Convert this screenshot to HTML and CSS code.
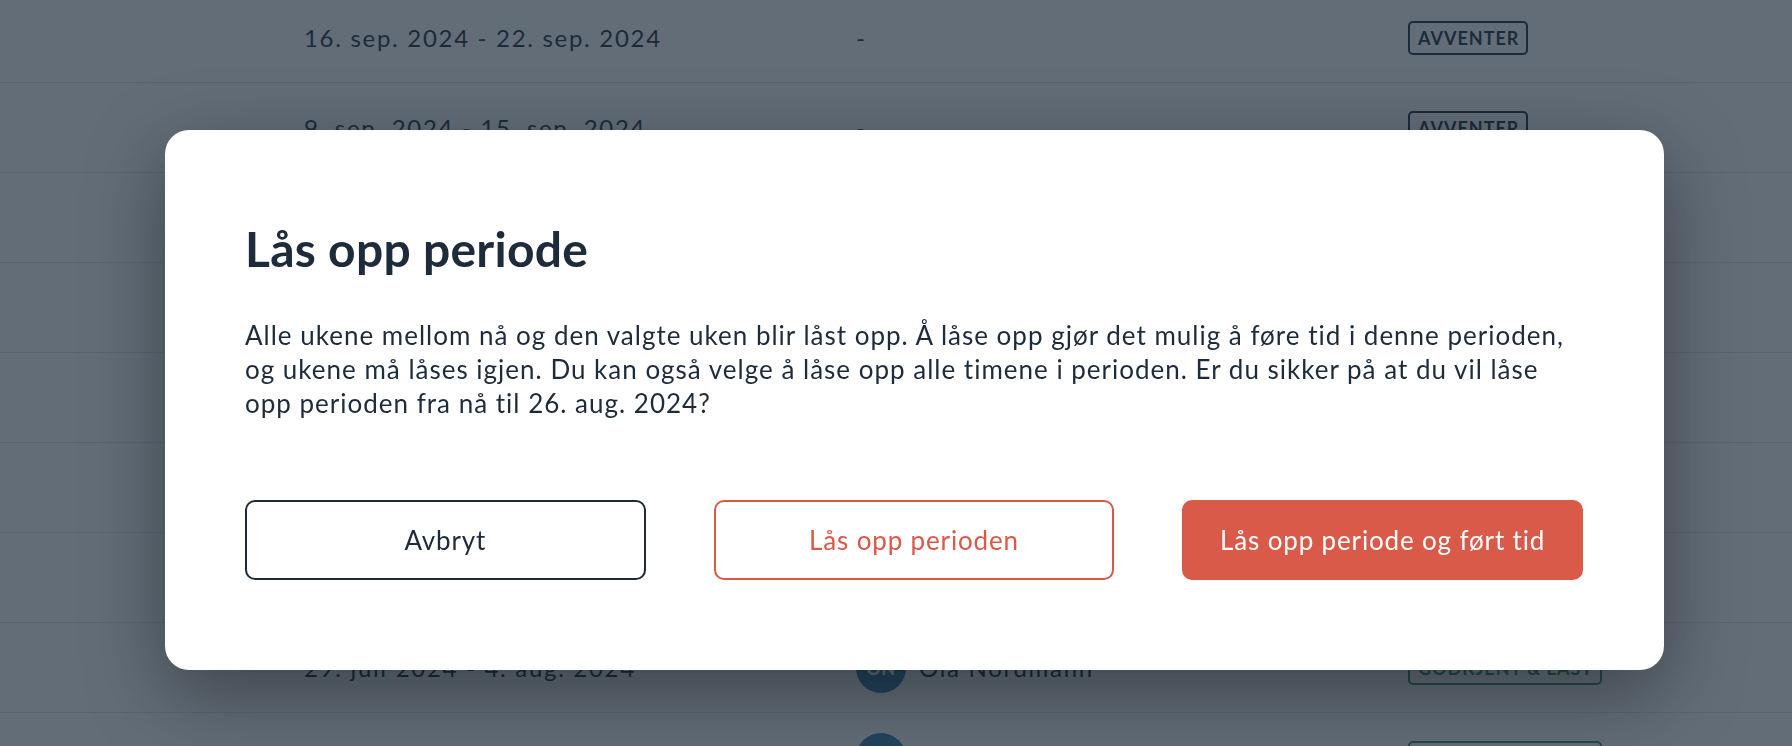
FILE: index.html
```html
<!DOCTYPE html>
<html lang="nb">
<head>
<meta charset="utf-8">
<title>Lås opp periode</title>
<link rel="stylesheet" href="styles.css">
</head>
<body>
<main class="page">
  <div class="table">
    <div class="row">
      <div class="c-date">16. sep. 2024 - 22. sep. 2024</div>
      <div class="c-who">-</div>
      <div class="c-status"><span class="badge">AVVENTER</span></div>
    </div>
    <div class="row">
      <div class="c-date">9. sep. 2024 - 15. sep. 2024</div>
      <div class="c-who">-</div>
      <div class="c-status"><span class="badge">AVVENTER</span></div>
    </div>
    <div class="row">
      <div class="c-date">2. sep. 2024 - 8. sep. 2024</div>
      <div class="c-who">-</div>
      <div class="c-status"><span class="badge">AVVENTER</span></div>
    </div>
    <div class="row">
      <div class="c-date">26. aug. 2024 - 1. sep. 2024</div>
      <div class="c-who">-</div>
      <div class="c-status"><span class="badge">AVVENTER</span></div>
    </div>
    <div class="row">
      <div class="c-date">19. aug. 2024 - 25. aug. 2024</div>
      <div class="c-who"><span class="avatar">ON</span><span>Ola Nordmann</span></div>
      <div class="c-status"><span class="badge badge-green">GODKJENT &amp; LÅST</span></div>
    </div>
    <div class="row">
      <div class="c-date">12. aug. 2024 - 18. aug. 2024</div>
      <div class="c-who"><span class="avatar">ON</span><span>Ola Nordmann</span></div>
      <div class="c-status"><span class="badge badge-green">GODKJENT &amp; LÅST</span></div>
    </div>
    <div class="row">
      <div class="c-date">5. aug. 2024 - 11. aug. 2024</div>
      <div class="c-who"><span class="avatar">ON</span><span>Ola Nordmann</span></div>
      <div class="c-status"><span class="badge badge-green">GODKJENT &amp; LÅST</span></div>
    </div>
    <div class="row">
      <div class="c-date">29. juli 2024 - 4. aug. 2024</div>
      <div class="c-who"><span class="avatar">ON</span><span>Ola Nordmann</span></div>
      <div class="c-status"><span class="badge badge-green">GODKJENT &amp; LÅST</span></div>
    </div>
    <div class="row">
      <div class="c-date">22. juli 2024 - 28. juli 2024</div>
      <div class="c-who"><span class="avatar">ON</span><span>Ola Nordmann</span></div>
      <div class="c-status"><span class="badge badge-green">GODKJENT &amp; LÅST</span></div>
    </div>
  </div>
</main>

<div class="overlay">
  <div class="modal" role="dialog" aria-labelledby="modal-title">
    <h2 class="modal-title" id="modal-title">Lås opp periode</h2>
    <p class="modal-text">Alle ukene mellom nå og den valgte uken blir låst opp. Å låse opp gjør det mulig å føre tid i denne perioden, og ukene må låses igjen. Du kan også velge å låse opp alle timene i perioden. Er du sikker på at du vil låse opp perioden fra nå til 26. aug. 2024?</p>
    <div class="modal-actions">
      <button class="btn btn-dark-outline">Avbryt</button>
      <button class="btn btn-red-outline">Lås opp perioden</button>
      <button class="btn btn-red">Lås opp periode og ført tid</button>
    </div>
  </div>
</div>
</body>
</html>
```

FILE: styles.css
```css
html, body {
  margin: 0;
  padding: 0;
  height: 100%;
  overflow: hidden;
}

body {
  background: #ffffff;
  color: #1e2b3b;
  font-family: Lato, "Open Sans", "Liberation Sans", sans-serif;
}

.page {
  width: 100%;
}

.table {
  margin-top: -7px;
}

.row {
  box-sizing: border-box;
  height: 90px;
  display: grid;
  grid-template-columns: 552px 552px 1fr;
  align-items: center;
  padding-left: 304px;
  border-bottom: 1px solid #e3e6ea;
  font-size: 24px;
  letter-spacing: 1.7px;
}

.c-who {
  display: flex;
  align-items: center;
  gap: 13px;
}

.avatar {
  width: 50px;
  height: 50px;
  border-radius: 50%;
  background: #3278ac;
  color: #ffffff;
  font-weight: 700;
  font-size: 18px;
  letter-spacing: 0.5px;
  display: flex;
  align-items: center;
  justify-content: center;
}

.c-status {
  display: flex;
}

.badge {
  box-sizing: border-box;
  height: 34px;
  padding: 0 7px 0 8px;
  display: inline-flex;
  align-items: center;
  border: 2px solid #1e2b3b;
  border-radius: 5px;
  font-size: 18px;
  font-weight: 700;
  letter-spacing: 1px;
  color: #1e2b3b;
}

.badge-green {
  border-color: #3a8c55;
  color: #3a8c55;
}

/* Overlay + modal */
.overlay {
  position: fixed;
  inset: 0;
  background: rgba(28, 43, 59, 0.69);
  padding: 130px 0 0 165px;
  box-sizing: border-box;
}

.modal {
  box-sizing: border-box;
  width: 1499px;
  padding: 90px 81px 90px 80px;
  background: #ffffff;
  border-radius: 24px;
  box-shadow: 0 24px 80px rgba(0, 0, 0, 0.38);
}

.modal-title {
  margin: 0;
  font-size: 48px;
  line-height: 58px;
  font-weight: 700;
  letter-spacing: 0.26px;
  color: #1e2b3b;
}

.modal-text {
  margin: 40px 0 80px;
  font-size: 26px;
  line-height: 34px;
  letter-spacing: 1px;
  color: #1e2b3b;
}

.modal-actions {
  display: grid;
  grid-template-columns: repeat(3, 1fr);
  gap: 68px;
}

.btn {
  box-sizing: border-box;
  height: 80px;
  border-radius: 10px;
  border: 2px solid transparent;
  background: #ffffff;
  font-family: inherit;
  font-size: 26px;
  font-weight: 400;
  letter-spacing: 0.85px;
  cursor: pointer;
}

.btn-dark-outline {
  border-color: #1e2b3b;
  color: #1e2b3b;
}

.btn-red-outline {
  border-color: #d95a48;
  color: #d95a48;
}

.btn-red {
  background: #d95a48;
  border-color: #d95a48;
  color: #ffffff;
}
```
